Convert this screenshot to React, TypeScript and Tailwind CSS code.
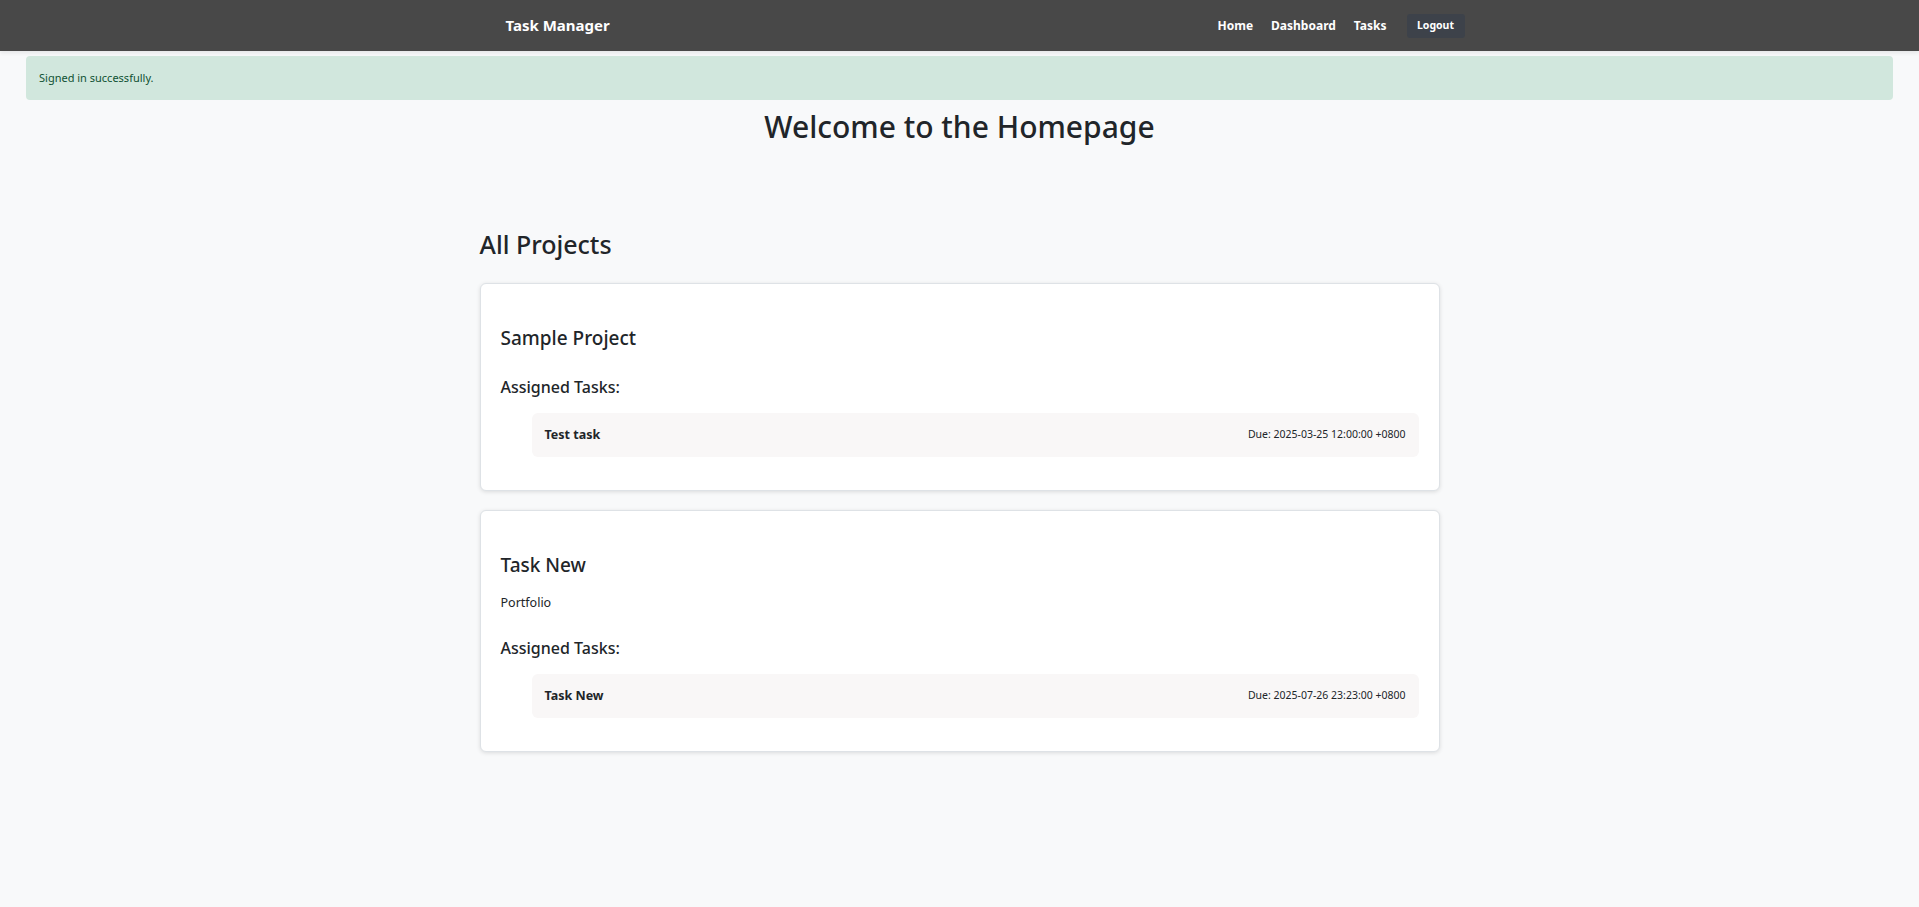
import React from 'react';

interface Task {
  title: string;
  due: string;
}

interface Project {
  name: string;
  description?: string;
  tasks: Task[];
}

const projects: Project[] = [
  {
    name: 'Sample Project',
    tasks: [{ title: 'Test task', due: '2025-03-25 12:00:00 +0800' }],
  },
  {
    name: 'Task New',
    description: 'Portfolio',
    tasks: [{ title: 'Task New', due: '2025-07-26 23:23:00 +0800' }],
  },
];

const ProjectCard: React.FC<{ project: Project }> = ({ project }) => (
  <div className="rounded-md border border-[#dee2e6] bg-white px-[20px] pt-[42px] pb-[33px] shadow-[0_1px_4px_rgba(0,0,0,0.12)]">
    <h3 className="text-[19px] leading-[24px] font-medium text-[#212529]">{project.name}</h3>
    {project.description && (
      <p className="mt-[17px] mb-[-1px] text-[12.5px] leading-[18px] text-[#212529]">{project.description}</p>
    )}
    <h4 className="mt-[27px] text-[16px] leading-[20px] font-medium text-[#212529]">Assigned Tasks:</h4>
    <ul className="mt-[16px] pl-[31px]">
      {project.tasks.map((t) => (
        <li
          key={t.title}
          className="flex h-[44px] items-center justify-between rounded-md bg-[#f9f7f7] px-[13px]"
        >
          <span className="text-[12.5px] font-bold text-[#212529]">{t.title}</span>
          <span className="text-[10.5px] text-[#212529]">Due: {t.due}</span>
        </li>
      ))}
    </ul>
  </div>
);

export default function App() {
  return (
    <div className="min-h-screen bg-[#f8f9fa] font-['Noto_Sans','Open_Sans',sans-serif] text-[#212529]">
      <header className="h-[51px] bg-[#484848] shadow-[0_2px_4px_rgba(0,0,0,0.08)]">
        <div className="mx-auto flex h-full w-[960px] items-center justify-between pl-[26px]">
          <span className="text-[15px] font-bold text-white">Task Manager</span>
          <nav className="mr-[-25px] flex items-center gap-[18px] text-[12px] font-bold text-white">
            <a href="#">Home</a>
            <a href="#">Dashboard</a>
            <a href="#">Tasks</a>
            <button className="ml-[2px] h-[24px] w-[58px] rounded-[3px] bg-[#3d424a] text-[10.5px] font-bold text-white">
              Logout
            </button>
          </nav>
        </div>
      </header>

      <div className="mx-[26px] mt-[5px] rounded-[4px] bg-[#d1e7dd] px-[13px] py-[14px] text-[11px] leading-[16px] text-[#0f5132]">
        Signed in successfully.
      </div>

      <h1 className="mt-[7px] text-center text-[30px] leading-[40px] font-medium text-[#212529]">
        Welcome to the Homepage
      </h1>

      <main className="mx-auto mt-[82px] w-[960px]">
        <h2 className="text-[25px] leading-[30px] font-medium">All Projects</h2>
        <div className="mt-[24px] flex flex-col gap-[19px]">
          {projects.map((p) => (
            <ProjectCard key={p.name} project={p} />
          ))}
        </div>
      </main>
    </div>
  );
}
